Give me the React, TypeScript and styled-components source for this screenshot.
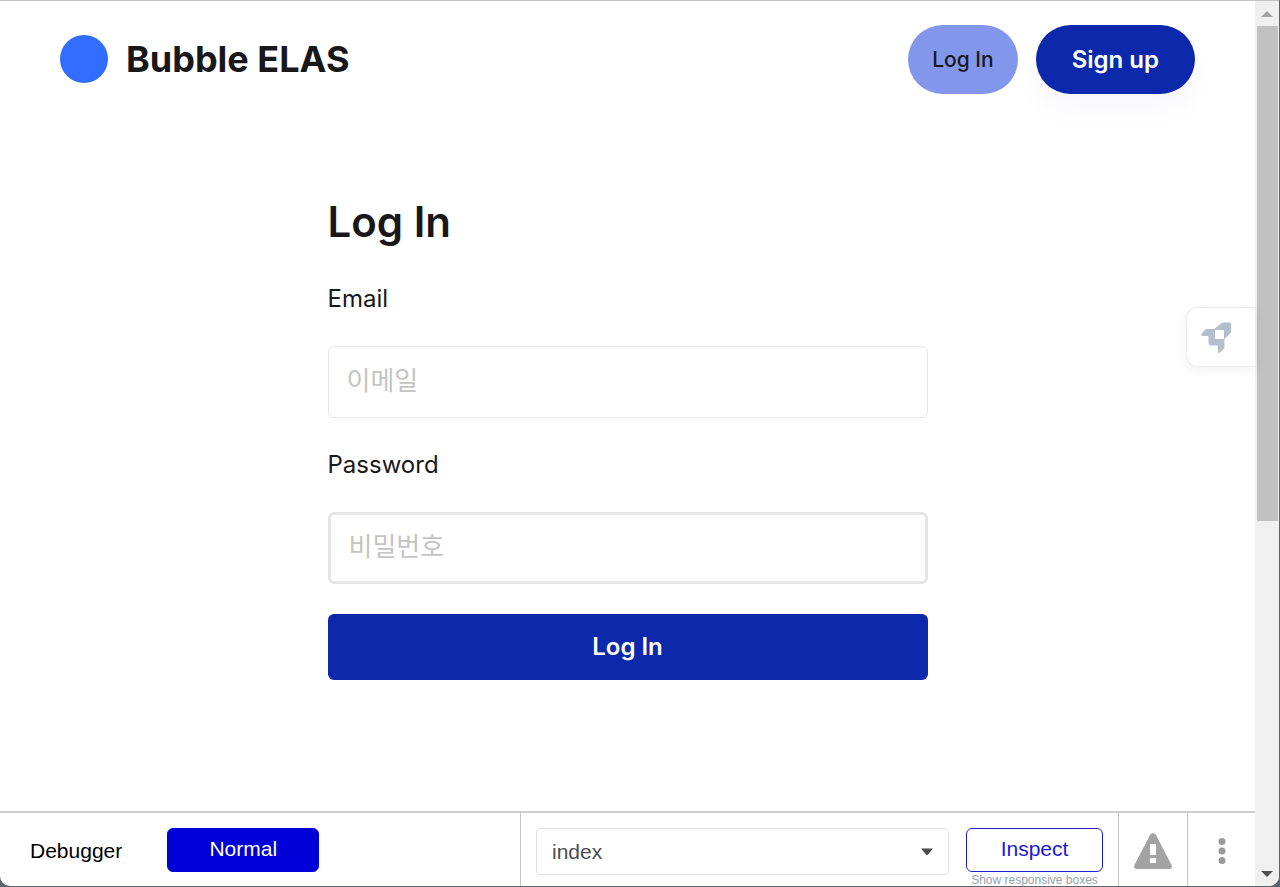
import React from 'react';
import styled, { createGlobalStyle, css } from 'styled-components';

const GlobalStyle = createGlobalStyle`
  *, *::before, *::after { box-sizing: border-box; }
  body {
    margin: 0;
    background: #5a6570;
    color: #18181b;
    font-family: Inter, 'Noto Sans CJK KR', sans-serif;
  }
  button, input, select { font: inherit; }
`;

const Window = styled.div`
  display: grid;
  grid-template-columns: 1fr 24px;
  min-height: calc(100vh - 1px);
  margin: 0 1px 1px 0;
  overflow: hidden;
  background: #fff;
  border-top: 1px solid #c3c3c5;
  border-radius: 0 0 10px 10px;
`;

const Page = styled.div`
  position: relative;
  display: flex;
  flex-direction: column;
  min-width: 0;
`;

const Header = styled.header`
  display: flex;
  align-items: center;
  justify-content: space-between;
  padding: 24px 60px;
`;

const Brand = styled.a`
  display: flex;
  align-items: center;
  gap: 18px;
  padding-bottom: 2px;
  color: #18181b;
  font-size: 36px;
  font-weight: 700;
  line-height: 48px;
  text-decoration: none;
`;

const BrandDot = styled.span`
  width: 48px;
  height: 48px;
  border-radius: 50%;
  background: #336dff;
`;

const HeaderActions = styled.nav`
  display: flex;
  gap: 18px;
`;

const PillButton = styled.button<{ $primary?: boolean }>`
  height: 69px;
  padding: 0 24px;
  border: 0;
  border-radius: 36px;
  background: #8297eb;
  color: #18181b;
  font-size: 21px;
  font-weight: 500;
  ${({ $primary }) =>
    $primary &&
    css`
      padding: 0 36px;
      background: #0c29ab;
      color: #fff;
      font-size: 24px;
      font-weight: 600;
      box-shadow: 0 16px 30px rgba(12, 41, 171, 0.03);
    `}
`;

const Main = styled.main`
  flex: 1;
  display: flex;
  justify-content: center;
  padding: 74px 24px 48px;
`;

const LoginForm = styled.form`
  display: flex;
  flex-direction: column;
  gap: 30px;
  width: 100%;
  max-width: 600px;
`;

const Title = styled.h1`
  margin: 0;
  font-size: 42px;
  font-weight: 600;
  line-height: 60px;
`;

const Field = styled.div`
  display: flex;
  flex-direction: column;
  gap: 30px;
`;

const Label = styled.label`
  font-size: 24px;
  line-height: 34px;
`;

const TextInput = styled.input<{ $thick?: boolean }>`
  width: 100%;
  height: 72px;
  padding: 0 18px 4px;
  border: ${({ $thick }) => ($thick ? 3 : 1)}px solid #e6e6e6;
  border-radius: 6px;
  background: #fff;
  color: #18181b;
  font-size: 26px;
  outline: none;
  &::placeholder { color: #c4c4c4; opacity: 1; }
`;

const SubmitButton = styled.button`
  height: 66px;
  padding: 0 0 2px;
  border: 0;
  border-radius: 6px;
  background: #0c29ab;
  color: #fff;
  font-size: 24px;
  font-weight: 600;
`;

const LauncherTab = styled.button`
  position: absolute;
  top: 306px;
  right: 0;
  display: flex;
  align-items: center;
  width: 69px;
  height: 60px;
  padding: 2px 14px 0;
  border: 1px solid #ececee;
  border-right: 0;
  border-radius: 12px 0 0 12px;
  background: #fff;
  box-shadow: 0 3px 12px rgba(0, 0, 0, 0.06);
`;

const DebugBar = styled.footer`
  display: grid;
  grid-template-columns: minmax(0, 520fr) minmax(0, 598fr) 69px 68px;
  height: 75px;
  border-top: 2px solid #cdcdcf;
  font-family: 'Liberation Sans', Arial, sans-serif;
  font-size: 21px;
`;

const DebugMode = styled.section`
  display: flex;
  align-items: flex-start;
  gap: 45px;
  padding: 15px 30px;
  color: #000;
`;

const DebugLabel = styled.span`
  line-height: 46px;
`;

const PageTools = styled.section`
  display: flex;
  align-items: flex-start;
  gap: 17px;
  padding: 15px 15px 0;
  border-left: 1px solid #c4c4c6;
`;

const ToolButton = styled.button<{ $solid?: boolean }>`
  width: ${({ $solid }) => ($solid ? 152 : 137)}px;
  height: 44px;
  padding: 0 0 2px;
  border: 1px solid ${({ $solid }) => ($solid ? '#0000d6' : '#1e1ec8')};
  border-radius: 6px;
  background: ${({ $solid }) => ($solid ? '#0000d6' : '#fff')};
  color: ${({ $solid }) => ($solid ? '#fff' : '#1818d8')};
`;

const SelectBox = styled.div`
  flex: 1;
  display: grid;
  align-items: center;
  & > * { grid-area: 1 / 1; }
  & > svg { justify-self: end; margin-right: 15px; pointer-events: none; }
`;

const PageSelect = styled.select`
  appearance: none;
  width: 100%;
  height: 47px;
  padding: 0 15px;
  border: 1px solid #e2e2e4;
  border-radius: 4px;
  background: #fff;
  color: #4c4c4e;
`;

const InspectGroup = styled.div`
  display: flex;
  flex-direction: column;
  align-items: center;
  gap: 1px;
`;

const ResponsiveLink = styled.a`
  color: #94a3ab;
  font-size: 12px;
  line-height: 14px;
  text-decoration: none;
`;

const IconButton = styled.button`
  display: flex;
  align-items: center;
  justify-content: center;
  padding: 0 0 1px;
  border: 0;
  border-left: 1px solid #c4c4c6;
  background: none;
`;

const ScrollTrack = styled.div`
  display: flex;
  flex-direction: column;
  background: #f0f0f0;
`;

const ScrollArrow = styled.div`
  display: flex;
  align-items: center;
  justify-content: center;
  height: 25px;
`;

const ScrollThumb = styled.div`
  flex: 495;
  margin: 0 1px 0 2px;
  background: #c1c1c1;
`;

const ScrollRest = styled.div`
  flex: 340;
`;

const RocketIcon = () => (
  <svg width="32" height="32" viewBox="0 0 32 32" aria-hidden="true">
    <path
      fill="#b3bfcc"
      stroke="#b3bfcc"
      strokeWidth="1"
      strokeLinejoin="round"
      d="M.7 12.300 L4.800 7.500 H13.500 L20.500 1.500 Q21 1 22 1 H28.500 Q29.700 1 29.700 2.200 V10.500 L23 17 V26 L19 30.200 Q17.200 31 17.200 29.500 V23 H10 Q8 23 8 21 V13.500 H1.300 Q.2 13.200 .7 12.300Z"
    />
    <rect x="14" y="8" width="9" height="9" rx="1" fill="#fff" />
  </svg>
);

const WarningIcon = () => (
  <svg width="38" height="36" viewBox="0 0 38 36" aria-hidden="true">
    <path
      fill="#a3a3a3"
      d="M16.300 1.600 Q19 -1.500 21.700 1.600 L37.300 31.500 Q39.300 35.800 35 36 H3 Q-1.300 35.800 .7 31.500Z"
    />
    <path fill="#fff" d="M16 11h6v11h-6zM16 25h6v5h-6z" />
  </svg>
);

const MoreIcon = () => (
  <svg width="8" height="28" viewBox="0 0 8 28" aria-hidden="true" fill="#9b9b9b">
    <circle cx="4" cy="4.500" r="3.500" />
    <circle cx="4" cy="14" r="3.500" />
    <circle cx="4" cy="23.500" r="3.500" />
  </svg>
);

export default function App() {
  return (
    <>
      <GlobalStyle />
      <Window>
        <Page>
          <Header>
            <Brand href="#">
              <BrandDot />
              Bubble ELAS
            </Brand>
            <HeaderActions>
              <PillButton type="button">Log In</PillButton>
              <PillButton type="button" $primary>
                Sign up
              </PillButton>
            </HeaderActions>
          </Header>

          <Main>
            <LoginForm onSubmit={(e) => e.preventDefault()}>
              <Title>Log In</Title>
              <Field>
                <Label htmlFor="email">Email</Label>
                <TextInput id="email" type="email" placeholder="이메일" />
              </Field>
              <Field>
                <Label htmlFor="password">Password</Label>
                <TextInput id="password" type="password" placeholder="비밀번호" $thick />
              </Field>
              <SubmitButton type="submit">Log In</SubmitButton>
            </LoginForm>
          </Main>

          <DebugBar>
            <DebugMode>
              <DebugLabel>Debugger</DebugLabel>
              <ToolButton type="button" $solid>
                Normal
              </ToolButton>
            </DebugMode>
            <PageTools>
              <SelectBox>
                <PageSelect aria-label="Page" defaultValue="index">
                  <option value="index">index</option>
                </PageSelect>
                <svg width="14" height="8" viewBox="0 0 14 8" aria-hidden="true">
                  <path d="M1 .5h12L8 6.500q-1 1-2 0z" fill="#4c4c4e" />
                </svg>
              </SelectBox>
              <InspectGroup>
                <ToolButton type="button">Inspect</ToolButton>
                <ResponsiveLink href="#">Show responsive boxes</ResponsiveLink>
              </InspectGroup>
            </PageTools>
            <IconButton type="button" aria-label="Issues">
              <WarningIcon />
            </IconButton>
            <IconButton type="button" aria-label="More options">
              <MoreIcon />
            </IconButton>
          </DebugBar>

          <LauncherTab type="button" aria-label="Launcher">
            <RocketIcon />
          </LauncherTab>
        </Page>

        <ScrollTrack aria-hidden="true">
          <ScrollArrow>
            <svg width="12" height="6" viewBox="0 0 12 6">
              <path d="M0 6 6 0l6 6z" fill="#a3a3a3" />
            </svg>
          </ScrollArrow>
          <ScrollThumb />
          <ScrollRest />
          <ScrollArrow>
            <svg width="12" height="6" viewBox="0 0 12 6">
              <path d="M0 0h12L6 6z" fill="#505050" />
            </svg>
          </ScrollArrow>
        </ScrollTrack>
      </Window>
    </>
  );
}
